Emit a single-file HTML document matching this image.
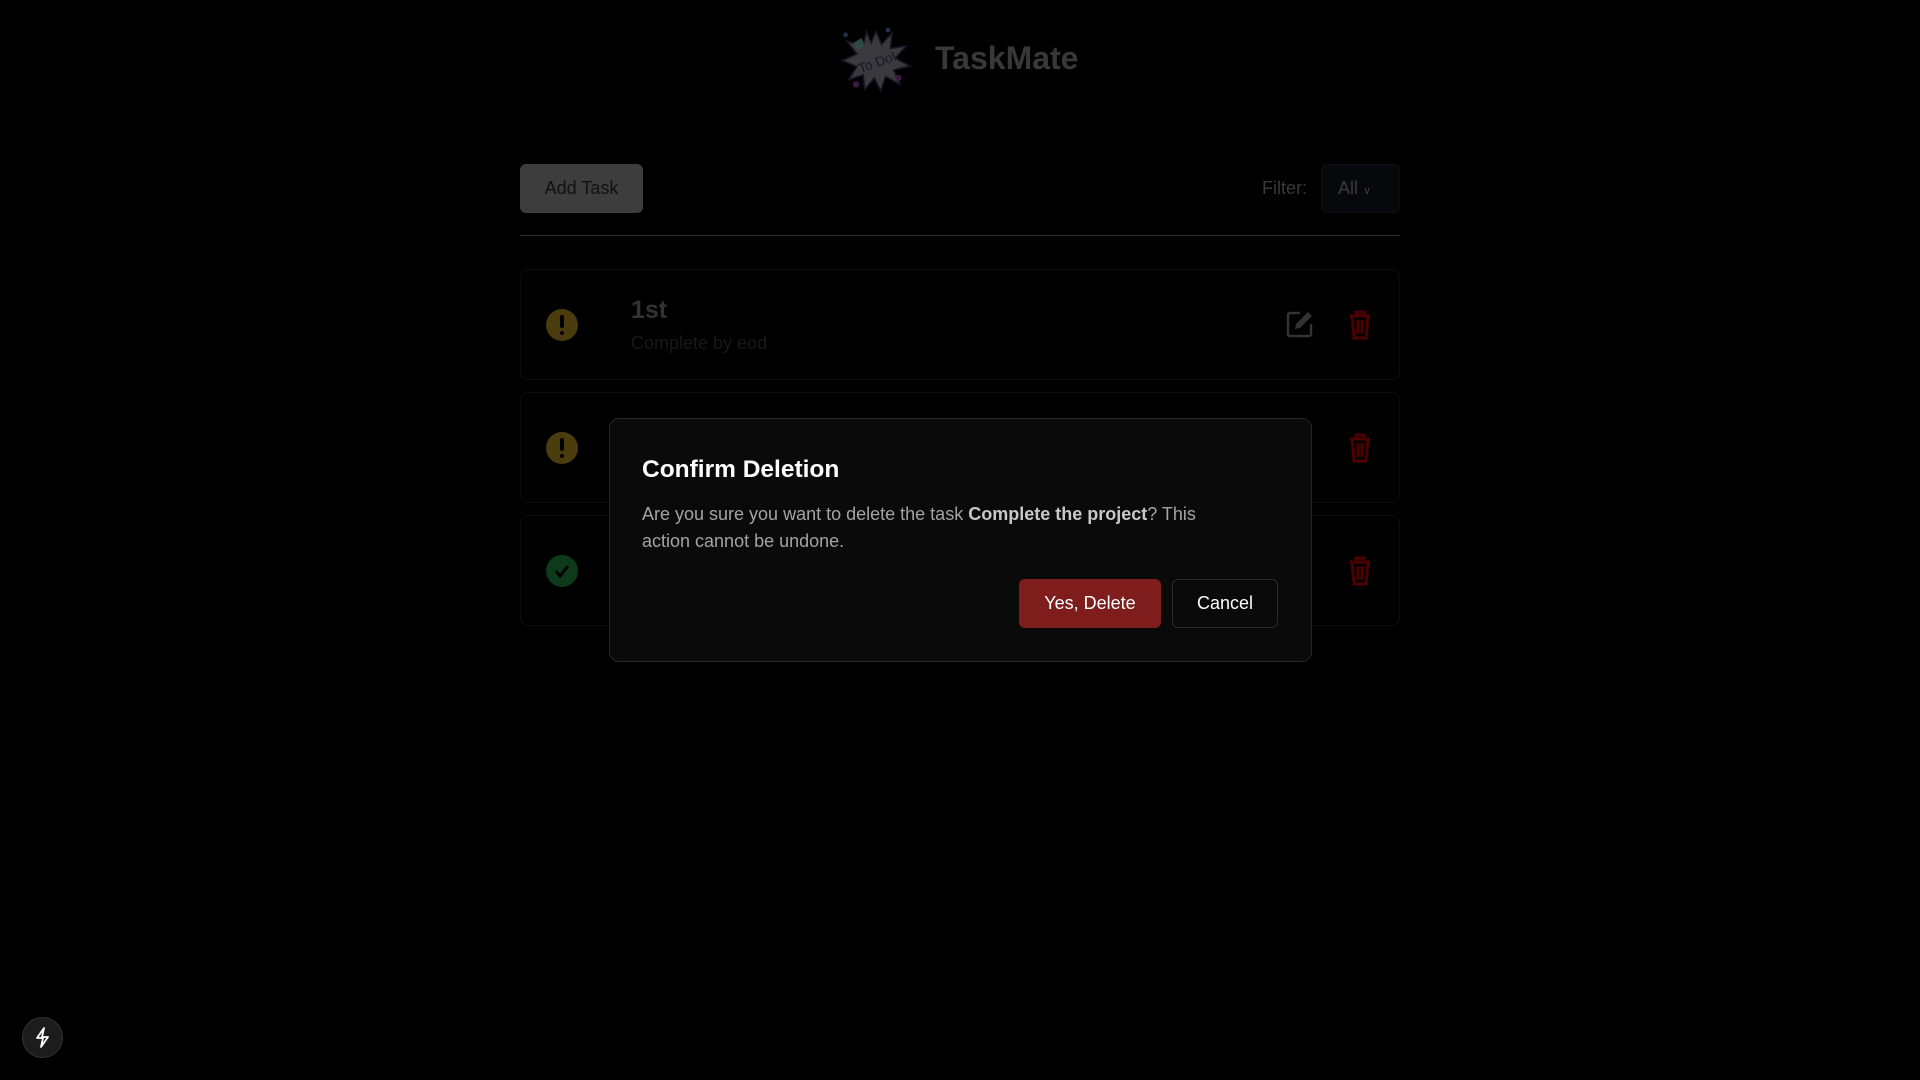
<!DOCTYPE html>
<html><head><meta charset="utf-8"><style>
*{box-sizing:border-box;margin:0;padding:0}
body{width:1920px;height:1080px;background:#000;font-family:"Liberation Sans",sans-serif;position:relative;overflow:hidden}
.abs{position:absolute}
.card{position:absolute;left:520px;width:880px;height:111px;border:1px solid #0c0c0c;border-radius:8px}
.circ{position:absolute;left:546px;width:32px;height:32px;border-radius:50%}
</style></head><body>
<svg class="abs" style="left:836px;top:18px" width="80" height="80" viewBox="0 0 100 90">
<polygon points="50,12 57,28 70,14 68,33 88,30 74,45 92,55 72,60 80,78 62,68 56,86 48,70 36,84 34,66 16,72 26,56 8,48 26,40 14,24 34,30 38,12 44,26" fill="#3a3a3e" stroke="#1c1424" stroke-width="2"/>
<path d="M22 26 l10 -6 l4 10 l-10 6z" fill="#2e4a48"/>
<circle cx="12" cy="16" r="3" fill="#23304a"/><circle cx="65" cy="10" r="3" fill="#23304a"/>
<circle cx="25" cy="78" r="4" fill="#3a1a40"/><circle cx="78" cy="70" r="4" fill="#3a1a40"/>
<text x="52" y="56" font-size="17" fill="#1a1424" text-anchor="middle" font-family="Liberation Sans" transform="rotate(-20 52 52)">To Do!</text>
</svg>
<div class="abs" style="left:935px;top:40px;font-size:32px;font-weight:bold;color:#383838">TaskMate</div>

<div class="abs" style="left:520px;top:164px;width:123px;height:49px;background:#3d3d3d;border-radius:6px;color:#111;font-size:18px;line-height:49px;text-align:center">Add Task</div>
<div class="abs" style="left:1262px;top:178px;font-size:18px;color:#3a3a3a">Filter:</div>
<div class="abs" style="left:1321px;top:164px;width:79px;height:49px;background:#07080c;border:1px solid #0e0f14;border-radius:6px;color:#3a3a3a;font-size:18px;line-height:47px;padding-left:16px">All <span style="font-size:11px">&#8744;</span></div>
<div class="abs" style="left:520px;top:235px;width:880px;height:1px;background:#2e2e2e"></div>

<div class="card" style="top:269px"></div>
<div class="card" style="top:392px"></div>
<div class="card" style="top:515px"></div>

<div class="circ" style="top:309px;background:#4a3c0c"><div style="position:absolute;left:14px;top:6px;width:4px;height:13px;background:#000;border-radius:2px"></div><div style="position:absolute;left:14px;top:22px;width:4px;height:4px;background:#000;border-radius:2px"></div></div>
<div class="circ" style="top:432px;background:#4a3c0c"><div style="position:absolute;left:14px;top:6px;width:4px;height:13px;background:#000;border-radius:2px"></div><div style="position:absolute;left:14px;top:22px;width:4px;height:4px;background:#000;border-radius:2px"></div></div>
<div class="circ" style="top:555px;background:#0e3a1c"><svg width="32" height="32"><path d="M10 16 l4 5 l8 -10" stroke="#000" stroke-width="3" fill="none"/></svg></div>

<div class="abs" style="left:631px;top:296px;font-size:25px;font-weight:bold;color:#333">1st</div>
<div class="abs" style="left:631px;top:333px;font-size:18px;color:#181818">Complete by eod</div>

<svg class="abs" style="left:1286px;top:310px" width="28" height="28" viewBox="0 0 28 28"><path d="M14 3H4a2 2 0 0 0-2 2v19a2 2 0 0 0 2 2h19a2 2 0 0 0 2-2V14" stroke="#333" stroke-width="2.5" fill="none"/><path d="M22 2l4 4-12 12-5 1 1-5z" fill="#333"/></svg>
<svg class="abs" style="left:1348px;top:310px" width="24" height="30" viewBox="0 0 24 30"><g fill="none" stroke="#4e0000" stroke-width="3"><path d="M2 6h20M8 6V2h8v4M4 6l2 22h12l2-22M10 10v14M14 10v14"/></g></svg>
<svg class="abs" style="left:1348px;top:433px" width="24" height="30" viewBox="0 0 24 30"><g fill="none" stroke="#4e0000" stroke-width="3"><path d="M2 6h20M8 6V2h8v4M4 6l2 22h12l2-22M10 10v14M14 10v14"/></g></svg>
<svg class="abs" style="left:1348px;top:556px" width="24" height="30" viewBox="0 0 24 30"><g fill="none" stroke="#4e0000" stroke-width="3"><path d="M2 6h20M8 6V2h8v4M4 6l2 22h12l2-22M10 10v14M14 10v14"/></g></svg>

<div class="abs" style="left:609px;top:418px;width:703px;height:244px;background:#0a0a0a;border:1px solid #262626;border-radius:10px">
<div class="abs" style="left:32px;top:37px;font-size:24.5px;font-weight:bold;color:#fff">Confirm Deletion</div>
<div class="abs" style="left:32px;top:82px;width:600px;font-size:18px;line-height:27px;color:#a3a3a3">Are you sure you want to delete the task <b style="color:#c8c8c8">Complete the project</b>? This action cannot be undone.</div>
<div class="abs" style="left:409px;top:160px;width:142px;height:49px;background:#7f1d1d;border-radius:6px;color:#fff;font-size:18px;line-height:49px;text-align:center">Yes, Delete</div>
<div class="abs" style="left:562px;top:160px;width:106px;height:49px;background:#0a0a0a;border:1px solid #2a2a2a;border-radius:6px;color:#fff;font-size:18px;line-height:47px;text-align:center">Cancel</div>
</div>

<div class="abs" style="left:22px;top:1017px;width:41px;height:41px;border-radius:50%;background:#1c1c1c;border:1px solid #333">
<svg width="39" height="39" viewBox="0 0 39 39"><path d="M21 10l-7 10h6l-2 9 7-10h-6z" fill="none" stroke="#fff" stroke-width="1.8" stroke-linejoin="round"/></svg></div>
</body></html>
